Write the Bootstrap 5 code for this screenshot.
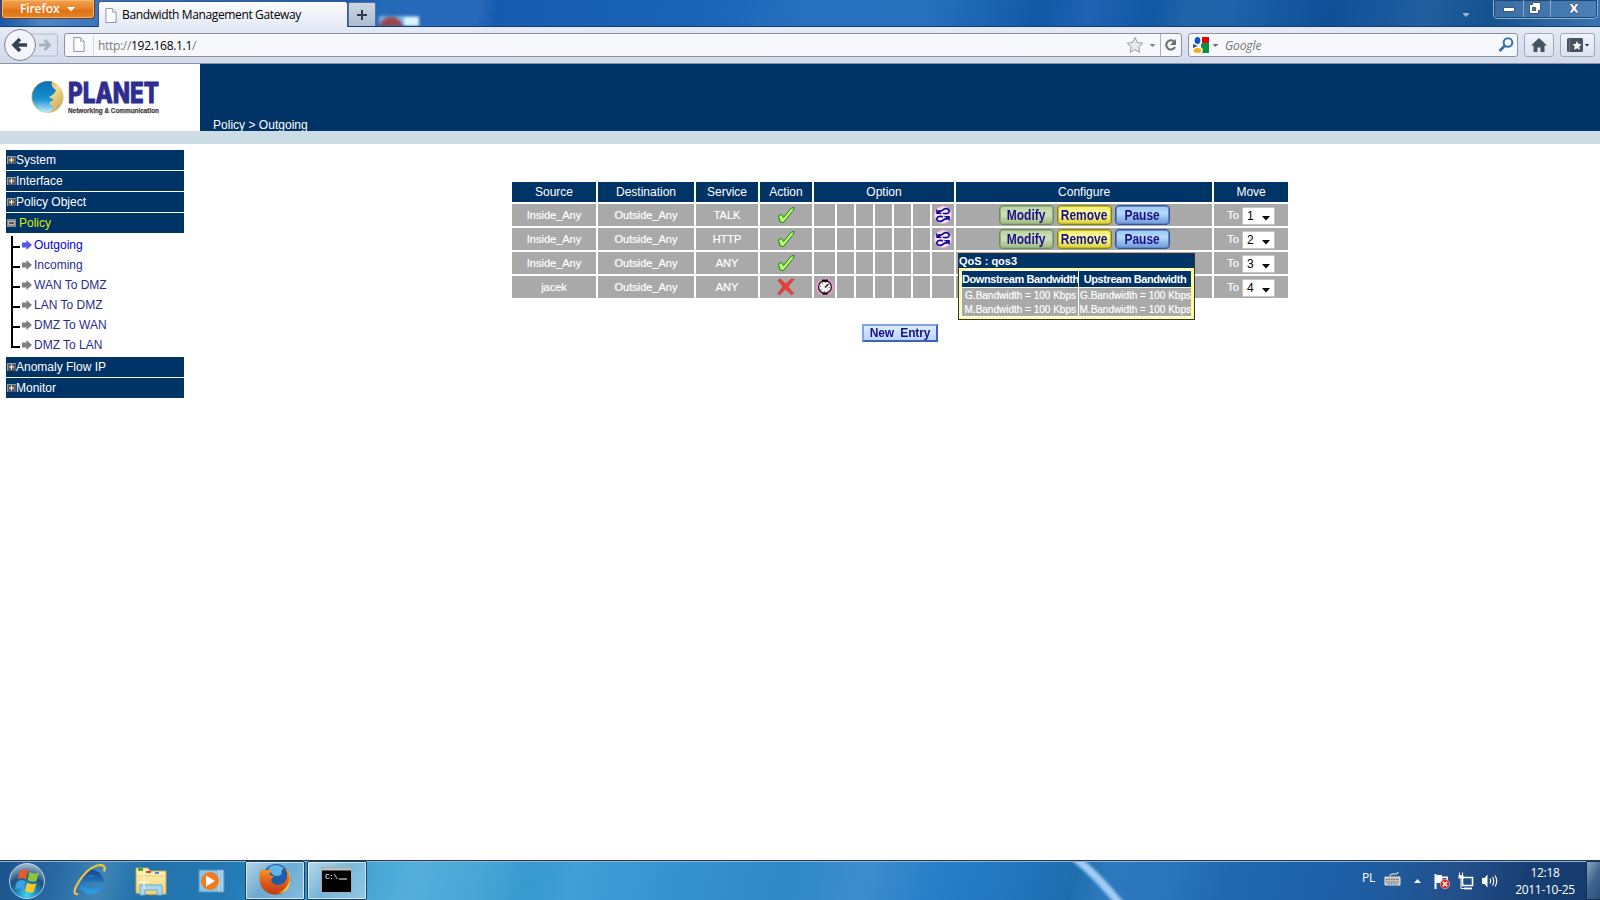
<!DOCTYPE html>
<html lang="en">
<head>
<meta charset="utf-8">
<title>Bandwidth Management Gateway</title>
<link href="https://cdn.jsdelivr.net/npm/bootstrap@5.3.0/dist/css/bootstrap.min.css" rel="stylesheet">
<script src="https://cdn.jsdelivr.net/npm/bootstrap@5.3.0/dist/js/bootstrap.bundle.min.js"></script>
<style>
html,body{width:1600px;height:900px;overflow:hidden}
body{font:12px/1.2 "Liberation Sans",Arial,sans-serif;background:#fff;color:#000}
svg{display:block;flex:none}
.ui{font-family:"Open Sans","Noto Sans",sans-serif}
/* window frame */
.titlebar{height:27px;border-bottom:1px solid #173c6c;background:linear-gradient(100deg,#1253a6 0,#4d86c9 3%,#2f6cb8 8%,#1a5bb0 22%,#2569b9 24%,#2868b9 30%,#175bb0 31%,#1964b7 44%,#2670bd 50%,#2670bc 58%,#1259a5 65%,#1f62b1 68%,#1158a3 72%,#2063a9 74%,#1f62a9 77%,#0e4f97 83%,#215f9f 89%,#14518f 93%,#3a74b0 100%)}
.ffbtn{width:94px;height:19px;margin-left:1px;border:1px solid #6d3a1c;border-top:0;border-radius:0 0 4px 4px;background:linear-gradient(#f1a24f,#e98227 50%,#dd7115 55%,#e68329);box-shadow:inset 0 0 0 1px #f9b76b;color:#fff;font-weight:600;font-size:12px;padding-left:18px;letter-spacing:-.1px}
.ffbtn svg{margin-left:8px}
.pagetab{width:250px;height:26px;margin:1px 0 0 3px;padding:2px 0 0 6px;border:1px solid #3b5a82;border-bottom:0;border-radius:3px 3px 0 0;background:linear-gradient(#fafbfd,#e5eaf5);font-size:12px;letter-spacing:-.37px}
.pagetab span{margin-left:5px}
.newtab{width:28px;height:24px;margin:2px 0 0 0;border:1px solid #52749d;border-bottom:0;border-radius:2px 2px 0 0;background:linear-gradient(#cbd5e3,#adbbd1)}
.behind{width:52px;height:26px;overflow:hidden}
.winctl{height:19px;margin-right:2px;border:1px solid #8fb0d2;border-top:0;border-radius:0 0 5px 5px;box-shadow:inset 0 0 0 1px #1d4675;background:rgba(100,145,190,.45);width:105px}
.winctl div{height:17px;display:flex;align-items:center;justify-content:center}
.winctl div+div{border-left:1px solid #87a8ca}
.toolbar{height:37px;border-bottom:1px solid #8c929e;background:linear-gradient(#e4eaf6,#d1d9ec)}
.fld{height:24px;border:1px solid #8d919b;border-radius:3px;background:#f6f8fc;font-size:12px}
.fld .sep{border-left:1px solid #a9aeb9;height:22px}
.tbtn{height:24px;border:1px solid #a3a9b7;border-radius:3px;background:linear-gradient(#f0f3fa,#dce2f0)}
/* router page */
.logo{width:200px;height:67px;background:#fff}
.head{height:67px;background:#036;color:#fff}
.stripe{height:13px;background:#ccdde6}
.side{width:178px;margin:6px 0 0 6px}
.grp{height:20px;margin-bottom:1px;background:#036;color:#fff;padding-left:1px;line-height:20px}
.grp svg{width:9px}
.sub{height:20px;color:#2b2b8f;line-height:20px}
.sub svg{width:10px;margin:0 2.500px 0 1.500px;color:#808080}
.pol{border-collapse:separate;border-spacing:2px;table-layout:fixed;width:780px;margin:36px 0 0 326px}
.pol th{height:20px;padding:0;background:#036;color:#fff;font-weight:400;text-align:center;line-height:20px}
.pol td{height:22px;padding:0;background:#a9a9a9;color:#fff;text-align:center;font-size:11px;line-height:22px;-webkit-text-stroke:.2px #fff}
.pol td svg{margin:auto}
.gb{height:20px;width:55px;border-radius:4px;color:#1b1087;font-weight:700;font-size:12px;line-height:19px;border:1px solid;-webkit-text-stroke:0}
.gb span{display:inline-block;transform:scaleY(1.15)}
.g1{border-color:#6d8e56;background:linear-gradient(#bcd0a0,#cfe0ba 45%,#9dba80);box-shadow:inset 0 0 0 1px #93b07a}
.g2{border-color:#8f8700;background:linear-gradient(#efea70,#ffffa0 45%,#d6cd3e);box-shadow:inset 0 0 0 1px #c2b828}
.g3{border-color:#31559f;background:linear-gradient(#9cc5f0,#b5dafa 40%,#6e98d6);box-shadow:inset 0 0 0 1px #6088cc}
.sel{width:33px;height:18px;margin-top:1px;background:#fff;border:1px solid #c5c5c5;border-radius:1px;color:#000;font-size:12px;line-height:17px;padding:1px 4px 0;-webkit-text-stroke:0}
.newentry{width:76px;height:18px;border:2px solid;border-color:#7ea3ea #3f62c0 #3f62c0 #7ea3ea;background:linear-gradient(#dcecff,#b9d5fb);color:#1b1087;font-weight:700;font-size:12px;line-height:15px;letter-spacing:-.15px;white-space:pre;text-align:center}
.newentry span{display:inline-block;transform:scaleY(1.12)}
.tip{left:958px;top:253px;width:237px;height:67px;border:1px solid #333;background:#ff9;color:#fff}
.tip .cap{height:14px;background:#036;font-weight:700;font-size:11px;line-height:14px}
.tip .grid{margin:2px 3px 0 2px;height:47px;display:grid;grid-template-columns:116px 112px;column-gap:1px;grid-template-rows:16px 28px;row-gap:1px;background:#fff;padding:1px}
.tip .h{background:#036;font-weight:700;font-size:11px;line-height:16px;text-align:center;white-space:nowrap}
.tip .b{background:#a9a9a9;font-size:10px;line-height:14px;padding-top:1px;text-align:right;white-space:nowrap;-webkit-text-stroke:.2px #fff}
/* taskbar */
.taskbar{height:40px;border-top:1px solid #27384c;box-shadow:inset 0 1px #8fb4d6;color:#fff;background:linear-gradient(105deg,#1a528b 0,#2a6ba6 4%,#4084b6 6.500%,#2272ab 9%,#2279b3 14%,#3392c8 20%,#4aa9d6 24%,#55aedb 26%,#45a3d4 31%,#3799cf 33%,#3f9fd6 36%,#3793cf 42%,#2e88c6 49%,#3d8dcd 54%,#2980c8 58%,#2176be 63%,#1e6eae 67%,#2d79be 69%,#2a74ba 73%,#1f68ae 77%,#1d60a8 83%,#1f5a9c 87%,#234f89 91%,#173f74 95%,#163b6c 100%)}
.task{height:39px;border:1px solid #1d3f5d;border-radius:2px;box-shadow:inset 0 0 0 1px rgba(255,255,255,.65);background:linear-gradient(135deg,rgba(255,255,255,.65),rgba(255,255,255,.3) 50%,rgba(255,255,255,.4))}
.clock{font-size:12px;line-height:17px;letter-spacing:-.3px;width:64px;margin:0 9px 0 -6px;text-align:center}
.showd{width:14px;height:39px;border:1px solid #16304f;border-right:0;background:linear-gradient(120deg,#8ca6c3,#3f6590 50%,#294f7e)}
</style>
</head>
<body class="d-flex flex-column">
<svg width="0" height="0" class="position-absolute">
  <defs>
    <linearGradient id="chk" x2="1" y2="0"><stop offset="0" stop-color="#b5ff5c"/><stop offset="1" stop-color="#c9ff7e"/></linearGradient>
    <radialGradient id="orb" cx=".5" cy=".9" r=".9"><stop offset="0" stop-color="#3fd4f8"/><stop offset=".35" stop-color="#1b86bb"/><stop offset=".6" stop-color="#1c4f7c"/><stop offset="1" stop-color="#a9c2d6"/></radialGradient>
    <linearGradient id="ieb" x2="0" y2="1"><stop offset="0" stop-color="#174f96"/><stop offset="1" stop-color="#2b9be6"/></linearGradient>
    <linearGradient id="fol" x2="0" y2="1"><stop offset="0" stop-color="#fff5bd"/><stop offset="1" stop-color="#f0d272"/></linearGradient>
    <linearGradient id="fox" x2="0" y2="1"><stop offset="0" stop-color="#f6a52a"/><stop offset=".5" stop-color="#e4601c"/><stop offset="1" stop-color="#bd3812"/></linearGradient>
    <linearGradient id="moon" x2="0" y2="1"><stop offset="0" stop-color="#0e6db8"/><stop offset=".55" stop-color="#1590d0"/><stop offset="1" stop-color="#c7ecfa"/></linearGradient>
    <linearGradient id="sand" x2="1" y2="1"><stop offset="0" stop-color="#8a7038"/><stop offset=".5" stop-color="#f5dd8e"/><stop offset="1" stop-color="#b79a52"/></linearGradient>
    <symbol id="tick" viewBox="0 0 18 18"><path d="M1.500 9.500 4.500 8.500 6.500 11.500 14.500 2 17 1.500 16.500 4 6.500 16.500 3 16z" fill="url(#chk)" stroke="#16860f" stroke-width="1"/></symbol>
    <symbol id="swirl" viewBox="0 0 18 18"><circle cx="9" cy="9" r="8.900" fill="#ffb9e6"/><circle cx="9" cy="9" r="7.800" fill="#fbe6f7"/><path d="M4.500 4.500Q6.500 6 8.500 4.200 11 1.800 13.800 3 16.500 5 14 7.200 11.500 8 9 7.200M13.500 13.500Q11.500 12 9.500 13.800 7 16.200 4.200 15 1.500 13 4 10.800 6.500 10 9 10.800" fill="none" stroke="#0a0a9e" stroke-width="1.700"/><path d="M2.200 3v5h6zM15.800 15v-5h-6z" fill="#0a0a9e"/></symbol>
    <symbol id="plus" viewBox="0 0 9 8"><path d="M0 0h9v8H0z" fill="#5e5e5e"/><path d="M0 0h9v1H1v7H0z" fill="#999"/><path d="M4.500 1.500v5M2 4h5" stroke="#fff" stroke-width="1"/></symbol>
    <symbol id="pg" viewBox="0 0 12 16"><path d="M.5.5h7l4 4v11H.5z" fill="#fdfdfe" stroke="#8b8e94"/><path d="M7.500.5v4h4" fill="#e4e6ea" stroke="#a4a7ad"/></symbol>
    <symbol id="arr" viewBox="0 0 10 10"><path d="M0 2.500h4.500V0L10 5 4.500 10V7.500H0z" fill="currentColor"/></symbol>
  </defs>
</svg>

<header class="titlebar ui d-flex align-items-start flex-shrink-0">
  <div class="ffbtn d-flex align-items-center"><span>Firefox</span><svg width="8" height="5"><path d="M0 0h8L4 4.500z" fill="#fff"/></svg></div>
  <div class="pagetab d-flex align-items-center"><svg width="12" height="15"><use href="#pg"/></svg><span>Bandwidth Management Gateway</span></div>
  <div class="newtab d-flex align-items-center justify-content-center"><svg width="12" height="12"><path d="M6 1v10M1 6h10" stroke="#2e3b49" stroke-width="2"/></svg></div>
  <div class="behind"><svg width="60" height="26" style="filter:blur(1.500px)"><path d="M3 16h40v12H3z" fill="#7fb4e6"/><path d="M28 17h15v12H28z" fill="#dcf6fa"/><ellipse cx="15" cy="28" rx="12" ry="11" fill="#99464d"/></svg></div>
  <div class="ms-auto me-4 pt-2"><svg width="6" height="10" class="mt-1"><path d="M0 1h6v1L3 5 0 2z" fill="#9fb1c4"/></svg></div>
  <div class="winctl d-flex">
    <div class="flex-shrink-0" style="width:29px"><svg width="12" height="6"><path d="M.5 1.500h11v4H.5z" fill="#fff" stroke="#43566f"/></svg></div>
    <div class="flex-shrink-0" style="width:27px;padding-right:5px"><svg width="13" height="13"><path d="M4.500.5h8v8h-2v3h-9v-9h3z" fill="#fff" stroke="#43566f"/><path d="M4.500 5.500h3v3h-3z" fill="#4c74a3" stroke="#43566f"/></svg></div>
    <div class="flex-fill"><svg width="12" height="11"><path d="M1 .5h3.200L6 3 7.800.5H11L8 5.200l3 4.800H7.800L6 7.500 4.200 10H1l3-4.800z" fill="#fff" stroke="#43566f" stroke-width=".8"/></svg></div>
  </div>
</header>

<nav class="toolbar ui d-flex align-items-center flex-shrink-0">
  <svg width="64" height="36"><path d="M30 7h25.500q2 0 2 2v18q0 2-2 2H30z" fill="#dde3f0" stroke="#b3bac8"/><path d="M39 18h10M44.500 13l5 5-5 5" fill="none" stroke="#a8b1bd" stroke-width="3"/><circle cx="20" cy="18" r="15.500" fill="#f3f5fa" stroke="#7d828c"/><path d="M27 18H15M20 12l-6 6 6 6" fill="none" stroke="#36434f" stroke-width="3.600"/></svg>
  <div class="fld d-flex align-items-center" style="width:1118px">
    <svg width="28" height="22"><use href="#pg" x="8" y="3" width="12" height="15"/></svg><div class="sep" style="border-color:#d5d8e0"></div>
    <div class="ms-1 flex-fill" style="letter-spacing:-.31px;padding-top:2px"><span style="color:#7b7b7b">http://</span>192.168.1.1<span style="color:#7b7b7b">/</span></div>
    <svg width="34" height="18"><path d="m9 1.500 2.400 5 5.400.7-4 3.700 1 5.500L9 13.700l-4.800 2.700 1-5.500-4-3.700 5.400-.7z" fill="#e7e8ea" stroke="#9a9da2"/><path d="M23.500 8h6l-3 3z" fill="#7f8287"/></svg>
    <div class="sep"></div>
    <svg width="20" height="20"><path d="M13 6.500A4.600 4.600 0 1 0 14 12" fill="none" stroke="#6b6e73" stroke-width="2"/><path d="M15 4v6H9z" fill="#6b6e73"/></svg>
  </div>
  <div class="fld d-flex align-items-center" style="width:330px;margin-left:6px">
    <svg width="34" height="18"><path d="M4 1h16v16H4z" fill="#fff"/><path d="M13 1h7v6h-7z" fill="#e8000c"/><path d="M12 8q2-2 8-1v10h-7q2-4-1-6z" fill="#0a9142"/><path d="M4 8l5 2-5 2z" fill="#1b53c4"/><ellipse cx="8.500" cy="4.500" rx="2.900" ry="3.500" fill="#0f56c8"/><ellipse cx="8.500" cy="14.500" rx="4" ry="2.500" fill="#f5ae13"/><path d="M23.500 8h6l-3 3z" fill="#6d7076"/></svg>
    <span class="fst-italic flex-fill" style="color:#747474;margin-left:2px;letter-spacing:-.1px;padding-top:2px">Google</span>
    <svg width="20" height="18"><circle cx="11" cy="6.500" r="4.300" fill="#fff" stroke="#3072af" stroke-width="2"/><path d="m8 9.500-5.500 5.500" stroke="#3072af" stroke-width="2.600"/></svg>
  </div>
  <div class="tbtn d-flex align-items-center justify-content-center" style="width:30px;margin-left:6px"><svg width="16" height="14"><path d="m8 0 8 7.500h-2.500V14h-4V9.500h-3V14h-4V7.500H0z" fill="#475360"/></svg></div>
  <div class="tbtn d-flex align-items-center justify-content-center" style="width:35px;margin-left:6px"><svg width="22" height="14"><rect width="16" height="14" rx="1.500" fill="#475360"/><path d="M2.500 0v14" stroke="#6f7b87"/><path d="m10 3 1.400 2.900 3.100.4-2.300 2.200.6 3.200L10 10.200l-2.800 1.500.6-3.200L5.500 6.300l3.100-.4z" fill="#fff"/><path d="M18 6h4l-2 2.500z" fill="#222"/></svg></div>
</nav>

<div class="d-flex flex-shrink-0">
  <div class="logo"><svg width="200" height="67"><circle cx="47.500" cy="33" r="16" fill="url(#sand)"/><path d="M52 17.600A16 16 0 1 0 46 49q8-1 7-7-4-1-3-4l4-2-5-3q6-3 7-7-6-3-4-8.400z" fill="url(#moon)"/><text x="68" y="38.500" font-family="Inter,sans-serif" font-weight="800" font-size="28" stroke="#2d2e8f" stroke-width=".9" textLength="91" lengthAdjust="spacingAndGlyphs" fill="#2d2e8f">PLANET</text><text x="68" y="48.500" font-family="Liberation Sans" font-weight="700" font-size="7" textLength="91" lengthAdjust="spacingAndGlyphs" fill="#4a4247" stroke="#4a4247" stroke-width=".25">Networking &amp; Communication</text></svg></div>
  <div class="head flex-fill d-flex align-items-end"><span style="margin-left:13px;line-height:12px;height:12px;letter-spacing:.02px">Policy &gt; Outgoing</span></div>
</div>
<div class="stripe flex-shrink-0"></div>

<main class="d-flex flex-fill align-items-start overflow-hidden">
  <aside class="side flex-shrink-0">
    <div class="grp d-flex align-items-center"><svg height="8"><use href="#plus"/></svg>System</div>
    <div class="grp d-flex align-items-center"><svg height="8"><use href="#plus"/></svg>Interface</div>
    <div class="grp d-flex align-items-center"><svg height="8"><use href="#plus"/></svg>Policy Object</div>
    <div class="grp d-flex align-items-center" style="color:#d8f000"><svg height="8" style="margin-right:3px"><path d="M0 0h9v8H0z" fill="#888"/><path d="M1.500 2.500h6v3h-6z" fill="#555" stroke="#ccc" stroke-width=".8"/></svg>Policy</div>
    <div class="d-flex" style="height:123px;padding-top:1px">
      <svg width="14" height="121"><path d="M6 1v111M5 12h9M5 32h9M5 52h9M5 72h9M5 92h9M5 112H14" stroke="#000" stroke-width="2"/></svg>
      <div class="flex-fill">
        <div class="sub d-flex align-items-center" style="color:#0000f0"><svg height="10" style="color:#5555ee"><use href="#arr"/></svg>Outgoing</div>
        <div class="sub d-flex align-items-center"><svg height="10"><use href="#arr"/></svg>Incoming</div>
        <div class="sub d-flex align-items-center"><svg height="10"><use href="#arr"/></svg>WAN To DMZ</div>
        <div class="sub d-flex align-items-center"><svg height="10"><use href="#arr"/></svg>LAN To DMZ</div>
        <div class="sub d-flex align-items-center"><svg height="10"><use href="#arr"/></svg>DMZ To WAN</div>
        <div class="sub d-flex align-items-center"><svg height="10"><use href="#arr"/></svg>DMZ To LAN</div>
      </div>
    </div>
    <div class="grp d-flex align-items-center"><svg height="8"><use href="#plus"/></svg>Anomaly Flow IP</div>
    <div class="grp d-flex align-items-center"><svg height="8"><use href="#plus"/></svg>Monitor</div>
  </aside>

  <section>
    <table class="pol">
      <colgroup><col style="width:84px"><col style="width:96px"><col style="width:62px"><col style="width:52px"><col style="width:21px"><col style="width:17px"><col style="width:17px"><col style="width:17px"><col style="width:17px"><col style="width:17px"><col style="width:22px"><col style="width:256px"><col style="width:74px"></colgroup>
      <tr><th>Source</th><th>Destination</th><th>Service</th><th>Action</th><th colspan="7">Option</th><th>Configure</th><th>Move</th></tr>
      <tr><td>Inside_Any</td><td>Outside_Any</td><td>TALK</td><td><svg width="18" height="18"><use href="#tick"/></svg></td><td></td><td></td><td></td><td></td><td></td><td></td><td><svg width="18" height="18"><use href="#swirl"/></svg></td>
        <td><div class="d-flex justify-content-center" style="gap:3px"><div class="gb g1"><span>Modify</span></div><div class="gb g2"><span>Remove</span></div><div class="gb g3"><span>Pause</span></div></div></td>
        <td><div class="d-flex align-items-center justify-content-center" style="gap:3px">To<div class="sel d-flex justify-content-between align-items-center">1<svg width="8" height="5" class="mx-0 mt-1 mb-0"><path d="M0 0h8L4 4.500z"/></svg></div></div></td></tr>
      <tr><td>Inside_Any</td><td>Outside_Any</td><td>HTTP</td><td><svg width="18" height="18"><use href="#tick"/></svg></td><td></td><td></td><td></td><td></td><td></td><td></td><td><svg width="18" height="18"><use href="#swirl"/></svg></td>
        <td><div class="d-flex justify-content-center" style="gap:3px"><div class="gb g1"><span>Modify</span></div><div class="gb g2"><span>Remove</span></div><div class="gb g3"><span>Pause</span></div></div></td>
        <td><div class="d-flex align-items-center justify-content-center" style="gap:3px">To<div class="sel d-flex justify-content-between align-items-center">2<svg width="8" height="5" class="mx-0 mt-1 mb-0"><path d="M0 0h8L4 4.500z"/></svg></div></div></td></tr>
      <tr><td>Inside_Any</td><td>Outside_Any</td><td>ANY</td><td><svg width="18" height="18"><use href="#tick"/></svg></td><td></td><td></td><td></td><td></td><td></td><td></td><td></td><td></td>
        <td><div class="d-flex align-items-center justify-content-center" style="gap:3px">To<div class="sel d-flex justify-content-between align-items-center">3<svg width="8" height="5" class="mx-0 mt-1 mb-0"><path d="M0 0h8L4 4.500z"/></svg></div></div></td></tr>
      <tr><td>jacek</td><td>Outside_Any</td><td>ANY</td><td><svg width="18" height="18"><path d="M1 2.500 3.500 1 8.500 6 14.500 1 17 1.500 11 8.500 16.500 15.500 14.500 16.500 8.500 11 2.500 17 1 15.500 6 8.500z" fill="#ef3e3e" stroke="#c92f35" stroke-width=".7"/></svg></td>
        <td><svg width="18" height="18"><circle cx="9" cy="9" r="8.900" fill="#f09ad2"/><circle cx="9" cy="9" r="6.400" fill="#f4f4f4" stroke="#111" stroke-width="1.200"/><path d="M6 1.500h6V4H6zM6.500 14.500h5v2.300h-5z" fill="#111"/><path d="m9 9.500 3.500-3.500" stroke="#111" stroke-width="1.200"/><circle cx="9" cy="9" r="4.500" fill="none" stroke="#444" stroke-dasharray="1 2.500"/></svg></td><td></td><td></td><td></td><td></td><td></td><td></td><td></td>
        <td><div class="d-flex align-items-center justify-content-center" style="gap:3px">To<div class="sel d-flex justify-content-between align-items-center">4<svg width="8" height="5" class="mx-0 mt-1 mb-0"><path d="M0 0h8L4 4.500z"/></svg></div></div></td></tr>
    </table>
    <div class="newentry" style="margin:24px 0 0 678px"><span>New  Entry</span></div>
  </section>
</main>

<div class="tip position-absolute">
  <div class="cap">QoS : qos3</div>
  <div class="grid"><div class="h" style="letter-spacing:-.42px">Downstream Bandwidth</div><div class="h" style="letter-spacing:-.42px">Upstream Bandwidth</div>
    <div class="b" style="padding-right:2px">G.Bandwidth = 100 Kbps<br>M.Bandwidth = 100 Kbps</div><div class="b">G.Bandwidth = 100 Kbps<br>M.Bandwidth = 100 Kbps</div></div>
</div>

<footer class="taskbar ui d-flex align-items-center flex-shrink-0 position-relative">
  <svg class="position-absolute" width="110" height="38" style="left:1060px;top:1px"><path d="M15-4Q36 12 60 42" fill="none" stroke="#a3cdf4" stroke-width="8" style="filter:blur(1.500px)"/></svg>
  <svg width="245" height="39">
    <circle cx="27" cy="20" r="17.500" fill="url(#orb)" stroke="#b9d0e0"/>
    <path d="M20 10q5-3 8-.5l-2 9q-4-2.500-8.500 0z" fill="#e8592a"/><path d="M29.500 11q4.500 2.500 9.500.5l-2.500 8.500q-4.500 2-9-1z" fill="#8cc63f"/><path d="M17 20.500q5-3 8.500 0l-2 8.500q-4-3-8.500-.5z" fill="#3fa1e3"/><path d="M27 21.500q4.500 3 9.500 1l-3 8.500q-4 2-8.500-1z" fill="#fcc82c"/>
    <path d="M100 25A9.500 9.500 0 1 1 100.500 18.500H83" fill="none" stroke="url(#ieb)" stroke-width="5.500"/><path d="M78 33q-7 1 0-11Q86 8 97 4.500q10-2 7 6" fill="none" stroke="#f2c33c" stroke-width="2.200"/>
    <path d="M136 7h12l2 3h16v23q-15 2-30-1z" fill="url(#fol)" stroke="#c9a94f"/><path d="M138 7h5v3h-5z" fill="#3fae2a"/><path d="M146 10h5v2h-5z" fill="#d14b3a"/><path d="M155 11h4v2h-4z" fill="#3b8fe0"/><path d="M137 15h29" stroke="#e6cd80"/><path d="M140 34V24h22v10h-5v-5h-12v5z" fill="#a8d8f0" stroke="#6fa9cc"/><path d="M144 15v13M138 21h12" stroke="#fff"/>
    <path d="M199 9h21l4 0v22h-25z" fill="#8dc3e4" stroke="#5b94bd"/><path d="M219 9v22M222 9v22" stroke="#c5e1f2"/><circle cx="210" cy="20" r="9" fill="#f27b1e"/><path d="M206 14.500v11l9-5.500z" fill="#fff"/>
  </svg>
  <div class="task d-flex align-items-center justify-content-center" style="width:60px;padding-bottom:3px"><svg width="34" height="34"><circle cx="18" cy="15" r="13" fill="#1d5ca8"/><path d="M10 6q7-6 16 0-4 3-2 6-6 4-10 0z" fill="#63b4e6"/><path d="M3 7q2 2 4 1 4-1 7 1-3 2-2 4 2 1 4 1l-3 4q1 5 7 5 8-1 9-8 1-6-3-10 6 4 6.500 12A15.500 15.500 0 0 1 1.500 17Q1 11 3 7z" fill="url(#fox)"/><path d="M29 8q5 8 0 16-4 6-10 7 14 0 13-15 0-5-3-8z" fill="#f9c93c"/></svg></div>
  <div class="task d-flex align-items-center justify-content-center" style="width:60px;margin-left:2px;padding:0 2px 2px 0"><svg width="31" height="26"><path d="M.5.500h30v25H.5z" fill="#000" stroke="#aaa"/><path d="M1 1h29v2.500H1z" fill="#b9bec4"/><text x="4" y="12" font-family="Liberation Mono" font-size="8" textLength="13" fill="#fff">C:\</text><path d="M18 12h8" stroke="#fff"/></svg></div>
  <div class="ms-auto" style="font-size:12px;margin-bottom:4px;letter-spacing:-.3px">PL</div>
  <svg width="140" height="39" style="margin-left:4px">
    <path d="M6 16h15v8H6z" fill="#bdbdbd" stroke="#e8e5df"/><path d="M7 18.500h13M7 21h13M9 23h9" stroke="#777" stroke-dasharray="1.500 1"/><path d="M11 15q0-2 4-2 4 0 4-2" fill="none" stroke="#ccc" stroke-width="1.300"/>
    <path d="M35 22h7l-3.500-4z" fill="#fff"/>
    <path d="M56.500 13v15" stroke="#fff" stroke-width="2"/><path d="M57 14h6v1.500h6V22H57z" fill="#fff"/><path d="M63.500 17h4v3h-4z" fill="#1f4f88"/><circle cx="66" cy="23" r="4.700" fill="#d8262e" stroke="#f3b3b0" stroke-width=".7"/><path d="m63.800 20.800 4.400 4.400m0-4.400-4.400 4.400" stroke="#fff" stroke-width="1.500"/>
    <path d="M83.500 16.500h10v8h-10z" fill="#1f4f88" stroke="#fff" stroke-width="1.600"/><path d="M85 27.500h8" stroke="#fff" stroke-width="1.800"/><path d="M79.500 14h5v3.500h-5z" fill="#fff"/><path d="M80.500 11.500v3M83.500 11.500v3M82 17v10.500h4" stroke="#fff" fill="none"/>
    <path d="M103 17h2.500l3-3.500v13l-3-3.500H103z" fill="#fff"/><path d="M111 17.500q1.500 2.500 0 5M113.500 16q2.500 4 0 8.500M116 14.500q3.500 5.500 0 11" fill="none" stroke="#fff" stroke-width="1.100"/>
  </svg>
  <div class="clock">12:18<br>2011-10-25</div>
  <div class="showd"></div>
</footer>
</body>
</html>
